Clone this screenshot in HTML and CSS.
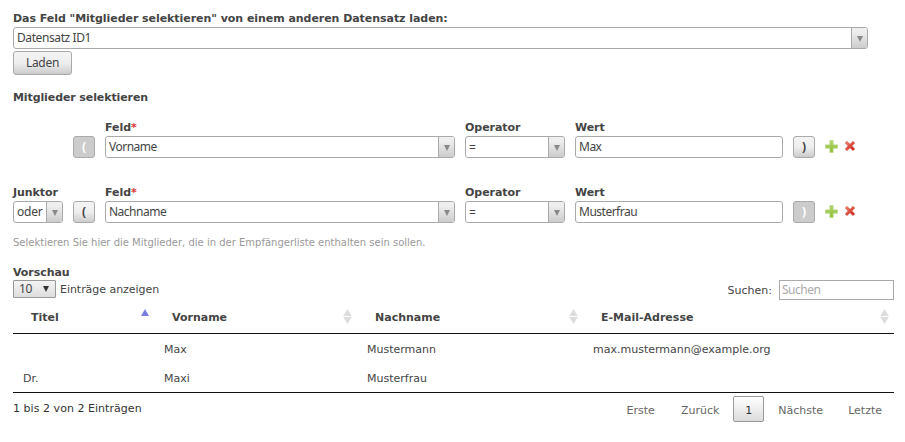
FILE: index.html
```html
<!DOCTYPE html>
<html lang="de">
<head>
<meta charset="utf-8">
<title>Mitglieder selektieren</title>
<link rel="stylesheet" href="styles.css">
</head>
<body>
<svg class="defs" width="0" height="0" aria-hidden="true">
  <defs>
    <linearGradient id="green" x1="0" y1="0" x2="0" y2="1"><stop offset="0" stop-color="#b5d66c"/><stop offset="1" stop-color="#88bd2c"/></linearGradient>
    <linearGradient id="red" x1="0" y1="0" x2="1" y2="1"><stop offset="0" stop-color="#f08a70"/><stop offset="1" stop-color="#c9140f"/></linearGradient>
    <symbol id="plus" viewBox="0 0 12 12"><path d="M4.5 .5h3v4h4v3h-4v4h-3v-4h-4v-3h4z" fill="url(#green)" stroke="#b9d98a" stroke-width=".8"/></symbol>
    <symbol id="cross" viewBox="0 0 12 12"><path d="M3 1.2 6 4 9 1.2 11 3 8.2 5.9 11 9 9 10.8 6 8 3 10.8 1 9 3.8 5.9 1 3z" fill="url(#red)" stroke="#d9928a" stroke-width=".7"/></symbol>
    <symbol id="sort" viewBox="0 0 9 15"><path d="M.2 7 4.5 0 8.8 7zM.2 8 4.5 15 8.8 8z" fill="#dcdcdc"/></symbol>
  </defs>
</svg>
<main class="page">
  <h2 class="label">Das Feld "Mitglieder selektieren" von einem anderen Datensatz laden:</h2>
  <div class="select select-load"><span class="value">Datensatz ID1</span><i class="arrow"></i></div>
  <button class="button load">Laden</button>
  <h2 class="label section">Mitglieder selektieren</h2>

  <div class="condition">
    <span></span><span></span><b>Feld<em>*</em></b><b>Operator</b><b>Wert</b><span></span><span></span>
    <span></span>
    <button class="button paren disabled" disabled>(</button>
    <div class="select"><span class="value">Vorname</span><i class="arrow"></i></div>
    <div class="select"><span class="value equals">=</span><i class="arrow"></i></div>
    <input class="text" value="Max">
    <button class="button paren">)</button>
    <div class="actions"><svg class="plus"><use href="#plus"/></svg><svg class="cross"><use href="#cross"/></svg></div>
  </div>
  <div class="condition second">
    <b>Junktor</b><span></span><b>Feld<em>*</em></b><b>Operator</b><b>Wert</b><span></span><span></span>
    <div class="select small"><span class="value">oder</span><i class="arrow"></i></div>
    <button class="button paren">(</button>
    <div class="select"><span class="value">Nachname</span><i class="arrow"></i></div>
    <div class="select"><span class="value equals">=</span><i class="arrow"></i></div>
    <input class="text" value="Musterfrau">
    <button class="button paren disabled" disabled>)</button>
    <div class="actions"><svg class="plus"><use href="#plus"/></svg><svg class="cross"><use href="#cross"/></svg></div>
  </div>
  <p class="help">Selektieren Sie hier die Mitglieder, die in der Empfängerliste enthalten sein sollen.</p>

  <h2 class="label preview">Vorschau</h2>
  <div class="toolbar">
    <div class="length"><span class="count">10<i></i></span><span class="entries">Einträge anzeigen</span></div>
    <label class="filter">Suchen:<input placeholder="Suchen"></label>
  </div>
  <table>
    <colgroup><col class="c1"><col class="c2"><col class="c3"><col class="c4"></colgroup>
    <thead><tr>
      <th><div>Titel<i class="asc"></i></div></th>
      <th><div>Vorname<svg class="sort"><use href="#sort"/></svg></div></th>
      <th><div>Nachname<svg class="sort"><use href="#sort"/></svg></div></th>
      <th><div>E-Mail-Adresse<svg class="sort"><use href="#sort"/></svg></div></th>
    </tr></thead>
    <tbody>
      <tr class="first"><td></td><td>Max</td><td>Mustermann</td><td>max.mustermann@example.org</td></tr>
      <tr><td>Dr.</td><td>Maxi</td><td>Musterfrau</td><td></td></tr>
    </tbody>
  </table>
  <div class="footer">
    <span class="info">1 bis 2 von 2 Einträgen</span>
    <nav><a>Erste</a><a>Zurück</a><a class="current">1</a><a>Nächste</a><a>Letzte</a></nav>
  </div>
</main>
</body>
</html>
```
FILE: styles.css
```css
* { box-sizing: border-box; }
body { margin: 0; background: #fff; color: #444; font: 11px/14px "DejaVu Sans", sans-serif; overflow: hidden; }
.defs { display: block; height: 0; }
.page { padding: 12px 11px 0 13px; }
.label { margin: 0; font-size: 11px; line-height: 14px; height: 15px; white-space: nowrap; letter-spacing: -.05px; }
.section { margin-top: 16px; height: 14px; letter-spacing: -.1px; }
.select, .text { display: flex; justify-content: space-between; height: 22px; border: 1px solid #aaa; border-radius: 3px; background: #fff; color: #444; font: 12px/20px "Noto Sans", sans-serif; letter-spacing: -.5px; overflow: hidden; }
.select-load { width: 855px; letter-spacing: -.4px; }
.small { letter-spacing: -.25px; }
.value { padding-left: 3px; }
.equals { padding-top: 1px; }
.arrow { width: 16px; display: flex; align-items: center; justify-content: center; border-left: 1px solid #aaa; background: linear-gradient(#eee 20%, #ccc); }
.arrow::before { content: ""; margin-top: 2px; border: 3.5px solid transparent; border-width: 6px 3.5px 0; border-top-color: #888; }
.text { width: 100%; padding: 0 3px 2px; outline: 0; }
.button { display: block; padding: 0; border: 1px solid #aaa; border-radius: 3px; background: linear-gradient(#f4f4f4, #eee 50%, #ccc); color: #444; font: 12px/20px "Noto Sans", sans-serif; }
.load { width: 59px; height: 24px; margin-top: 2px; letter-spacing: -.3px; }
.paren { width: 22px; height: 22px; font-weight: bold; font-size: 12px; padding-bottom: 2px; }
.disabled { background: #ccc; color: #fff; }
.condition { display: grid; grid-template-columns: 50px 22px 350px 100px 208px 22px 40px; grid-template-rows: 15px 22px; column-gap: 10px; margin-top: 16px; }
.condition b { letter-spacing: -.05px; }
.second { margin-top: 28px; }
.condition em { color: #d33; font-style: normal; }
.actions { display: flex; align-items: center; gap: 6px; height: 20px; }
.plus { width: 13px; height: 13px; }
.cross { width: 12px; height: 12px; }
.help { margin: 13px 0 0; color: #999; font-size: 10px; line-height: 14px; }
.preview { margin-top: 16px; height: 14px; }
.toolbar { display: flex; justify-content: space-between; height: 20px; }
.length { display: flex; gap: 4px; line-height: 18px; }
.entries { padding-top: 1px; letter-spacing: -.04px; }
.count { display: flex; align-items: center; justify-content: space-between; width: 43px; height: 18px; padding: 0 6px 0 5px; border: 1px solid #999; border-radius: 1px; background: linear-gradient(#f4f4f4, #ddd); font: 12px/16px "Noto Sans", sans-serif; letter-spacing: -.4px; }
.count i { border: 3px solid transparent; border-top: 6px solid #333; border-bottom: 0; }
.filter { display: flex; gap: 7px; line-height: 21px; }
.filter input { width: 115px; height: 20px; border: 1px solid #aaa; padding: 0 2px 2px; font: 12px/16px "Noto Sans", sans-serif; letter-spacing: -.5px; }
.filter input::placeholder { color: #aaa; opacity: 1; }
table { width: 881px; table-layout: fixed; border-collapse: separate; border-spacing: 0; border-bottom: 1px solid #111; }
.c1 { width: 141px; } .c2 { width: 203px; } .c3 { width: 226px; } .c4 { width: 311px; }
th { height: 34px; padding: 0 5px 0 18px; border-bottom: 1px solid #111; text-align: left; }
th div { display: flex; justify-content: space-between; align-items: center; height: 33px; padding-top: 2px; }
.sort { width: 9px; height: 15px; margin-top: -2px; }
.asc { margin: -10px 0 0; border: 4.5px solid transparent; border-bottom: 7px solid #7b7fe0; border-top: 0; }
td { height: 29px; padding: 2px 10px 0; }
.footer { display: flex; justify-content: space-between; }
.info { color: #333; padding-top: 9px; letter-spacing: .04px; }
nav { display: flex; margin-top: 3px; }
nav a { height: 26px; padding: 2px 11px 0; margin-left: 2px; border: 1px solid transparent; line-height: 24px; color: #666; }
nav a:last-child { margin-left: 1px; }
nav .current { border-color: #999; border-radius: 2px; background: linear-gradient(#fff, #dcdcdc); color: #333; }
```
